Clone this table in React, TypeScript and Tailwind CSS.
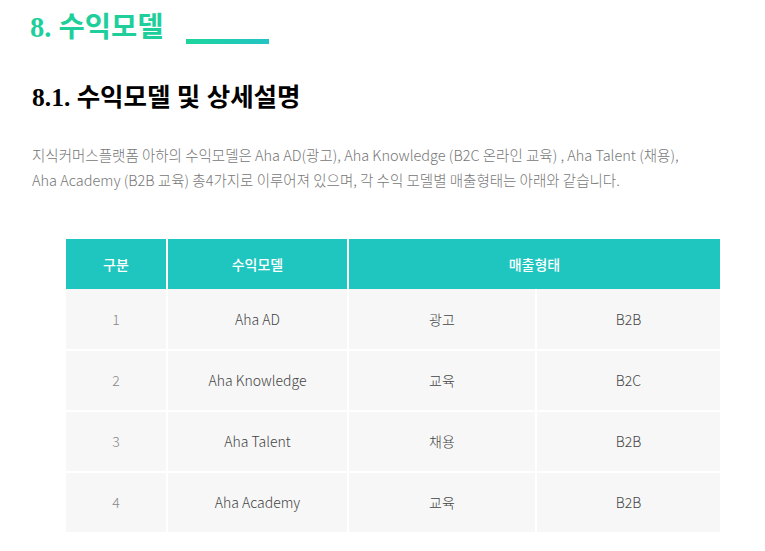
import React from "react";

const rows = [
  ["1", "Aha AD", "광고", "B2B"],
  ["2", "Aha Knowledge", "교육", "B2C"],
  ["3", "Aha Talent", "채용", "B2B"],
  ["4", "Aha Academy", "교육", "B2B"],
];

export default function App() {
  const serif = { fontFamily: '"Liberation Serif", "Noto Sans CJK KR", serif' };
  const sans = { fontFamily: '"Noto Sans CJK KR", "Noto Sans", sans-serif' };
  return (
    <div className="w-[765px] h-[551px] bg-white overflow-hidden">
      <div className="flex items-end pl-[30px] pt-[11px]">
        <h1 style={serif} className="text-[28.5px] leading-[34px] font-bold text-[#1ecf9c]">8. 수익모델</h1>
        <div className="ml-[23px] mb-[1px] w-[83px] h-[5px] bg-gradient-to-r from-[#1dd59d] to-[#23c3c2]" />
      </div>
      <h2 style={serif} className="pl-[32px] mt-[36px] text-[25.5px] leading-[34px] font-bold text-black">8.1. 수익모델 및 상세설명</h2>
      <div style={sans} className="pl-[32px] mt-[27px] text-[14.5px] leading-[25px] font-light text-[#777]">
        <p>지식커머스플랫폼 아하의 수익모델은 Aha AD(광고), Aha Knowledge (B2C 온라인 교육) , Aha Talent (채용),</p>
        <p>Aha Academy (B2B 교육) 총4가지로 이루어져 있으며, 각 수익 모델별 매출형태는 아래와 같습니다.</p>
      </div>
      <div className="pl-[66px] mt-[47px]">
        <table style={sans} className="w-[654px] border-collapse table-fixed text-[14px]">
          <colgroup>
            <col className="w-[101px]" />
            <col className="w-[181px]" />
            <col className="w-[188px]" />
            <col className="w-[184px]" />
          </colgroup>
          <thead>
            <tr className="h-[50px] bg-[#1fc6bf] text-white font-medium">
              <th className="border-r-2 border-white font-medium">구분</th>
              <th className="border-r-2 border-white font-medium">수익모델</th>
              <th colSpan={2} className="font-medium">매출형태</th>
            </tr>
          </thead>
          <tbody>
            {rows.map((r) => (
              <tr key={r[0]} className="h-[61px] bg-[#f7f7f7] text-[#444] font-light border-b-2 border-white">
                {r.map((c, i) => (
                  <td key={i} className={`text-center ${i < 3 ? "border-r-2 border-white" : ""} ${i === 0 ? "text-[#888]" : ""}`}>{c}</td>
                ))}
              </tr>
            ))}
          </tbody>
        </table>
      </div>
    </div>
  );
}
